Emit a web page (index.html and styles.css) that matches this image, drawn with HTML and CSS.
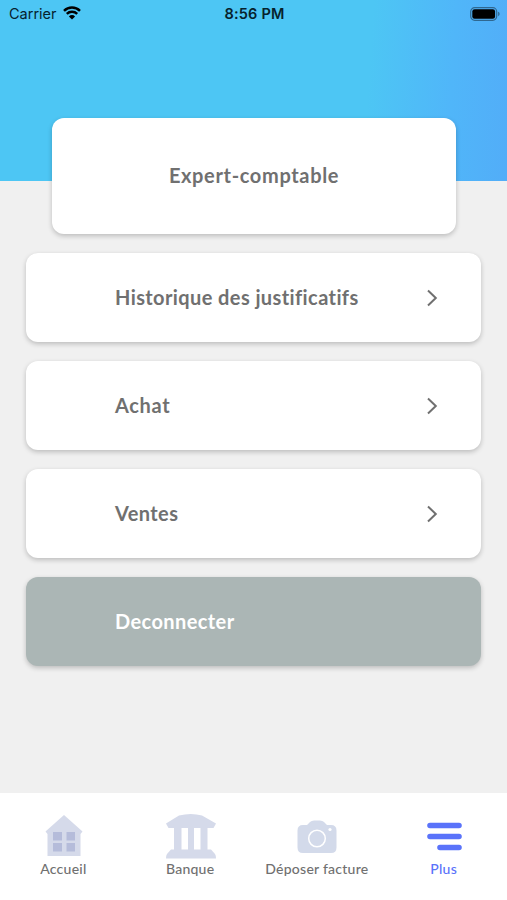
FILE: index.html
```html
<!DOCTYPE html>
<html lang="fr">
<head>
  <meta charset="UTF-8">
  <meta name="viewport" content="width=device-width, initial-scale=1.0">
  <title>Plus</title>
  <link rel="stylesheet" href="styles.css">
</head>
<body>

  <header class="header">
    <div class="status-bar">
      <div class="carrier">
        <span>Carrier</span>
        <svg class="wifi" viewBox="0 0 18 14">
          <path d="M1 4.8a11.5 11.5 0 0 1 16 0M3.8 7.8a7.5 7.5 0 0 1 10.400 0" fill="none" stroke="#000" stroke-width="2.5"/>
          <path d="M9 13.5 5.9 10.4a4.4 4.4 0 0 1 6.2 0z"/>
        </svg>
      </div>
      <span class="time">8:56 PM</span>
      <svg class="battery" viewBox="0 0 30 14">
        <rect x=".7" y=".7" width="26" height="12.6" rx="4" fill="none" stroke="#000" stroke-opacity=".42" stroke-width="1.2"/>
        <rect x="2.3" y="2.3" width="22.8" height="9.4" rx="2.3"/>
        <path d="M28.2 4.8c1.8.6 1.8 3.8 0 4.4z" fill-opacity=".45"/>
      </svg>
    </div>
  </header>

  <main class="content">
    <div class="card profile"><span class="label label-wide">Expert-comptable</span></div>
    <a class="card row">
      <span class="label">Historique des justificatifs</span>
      <svg class="chevron" viewBox="0 0 12 18"><path d="M2 1.5 9.8 9 2 16.5"/></svg>
    </a>
    <a class="card row">
      <span class="label label-wide">Achat</span>
      <svg class="chevron" viewBox="0 0 12 18"><path d="M2 1.5 9.8 9 2 16.5"/></svg>
    </a>
    <a class="card row">
      <span class="label">Ventes</span>
      <svg class="chevron" viewBox="0 0 12 18"><path d="M2 1.5 9.8 9 2 16.5"/></svg>
    </a>
    <a class="card row logout"><span class="label">Deconnecter</span></a>
  </main>

  <nav class="tab-bar">
    <a class="tab">
      <svg class="tab-icon" viewBox="0 0 52 46">
        <path d="M27 1 45.500 17.500 43.500 20V42H10.500V20L8.500 17.500z" fill="#d5daea"/>
        <path d="M16 18h9v8.500h-9zM29.500 18h8.500v8.500h-8.500zM16 29h9v8.500h-9zM29.500 29h8.500v8.500h-8.500z" fill="#b5bcda"/>
      </svg>
      <span>Accueil</span>
    </a>
    <a class="tab">
      <svg class="tab-icon" viewBox="0 0 52 46" fill="#d5daea">
        <path d="M2 9.500 15 1.500Q27-1.500 38 1.500L52 9.500 49.500 14H4.500z"/>
        <path d="M10 14h7.500v22H10zM24 14h6v22h-6zM36.500 14h7v22h-7z"/>
        <path d="M7 35.500h40l4 4.500q1 1 1 4.500H2Q2 41 3 40z"/>
      </svg>
      <span>Banque</span>
    </a>
    <a class="tab">
      <svg class="tab-icon" viewBox="0 0 52 46">
        <path d="M12 11h4l3-3q1.500-1.500 4-1.500h6q2.500 0 4 1.500l3 3h4q5.500 0 5.500 5.500v17q0 5.500-5.500 5.500H12q-5.500 0-5.500-5.500v-17Q6.500 11 12 11z" fill="#d3daea"/>
        <circle cx="26" cy="24.500" r="8.300" fill="none" stroke="#fff" stroke-width="1.500"/>
        <circle cx="39" cy="15.500" r="1.600" fill="#fff"/>
      </svg>
      <span>Déposer facture</span>
    </a>
    <a class="tab active">
      <svg class="tab-icon" viewBox="0 0 52 46">
        <path d="M12 11.500h29M12 22.500h29M22 33.500h19" fill="none" stroke="#5a73fa" stroke-width="5.600" stroke-linecap="round"/>
      </svg>
      <span>Plus</span>
    </a>
  </nav>

</body>
</html>
```

FILE: styles.css
```css
* {
  box-sizing: border-box;
}

body {
  margin: 0;
  height: 900px;
  display: flex;
  flex-direction: column;
  background: #f0f0f0;
  color: #707070;
  font-family: Lato, "Open Sans", sans-serif;
}

.header {
  height: 181px;
  flex-shrink: 0;
  background: linear-gradient(94deg, #4dc6f4 0%, #4dc6f4 72%, #50b6f9 88%, #52adf8 100%);
}

.status-bar {
  height: 27px;
  padding: 0 7px 0 9px;
  display: grid;
  grid-template-columns: 1fr auto 1fr;
  align-items: center;
  color: #06222d;
  font: 14.5px/27px Inter, sans-serif;
}

.carrier {
  display: flex;
  align-items: center;
  gap: 6px;
}

.wifi {
  width: 18px;
  height: 14px;
  margin-top: -2px;
}

.time {
  font-weight: 600;
  letter-spacing: 0.2px;
}

.battery {
  width: 30px;
  height: 14px;
  justify-self: end;
}

.content {
  flex: 1;
  margin-top: -63px;
  padding: 0 26px;
  display: flex;
  flex-direction: column;
  gap: 19px;
}

.card {
  display: flex;
  align-items: center;
  background: #fff;
  border-radius: 12px;
  box-shadow: 0 2px 5px rgba(0, 0, 0, 0.22);
}

.profile {
  height: 116px;
  margin: 0 25px 0 26px;
  justify-content: center;
}

.row {
  height: 89px;
  padding: 0 43px 0 89px;
  justify-content: space-between;
}

.label {
  padding-bottom: 2px;
  font-size: 20px;
  font-weight: bold;
  letter-spacing: 0.4px;
}

.label-wide {
  letter-spacing: 0.65px;
}

.chevron {
  width: 12px;
  height: 18px;
  fill: none;
  stroke: #707070;
  stroke-width: 2;
}

.logout {
  background: #abb6b5;
  color: #fff;
}

.tab-bar {
  height: 107px;
  padding-top: 21px;
  display: grid;
  grid-template-columns: repeat(4, 1fr);
  background: #fff;
  font-size: 14px;
  font-weight: 500;
  letter-spacing: 0.25px;
}

.tab {
  display: flex;
  flex-direction: column;
  align-items: center;
  line-height: 18px;
}

.tab-icon {
  width: 52px;
  height: 46px;
}

.active {
  color: #5a73fa;
}
```
